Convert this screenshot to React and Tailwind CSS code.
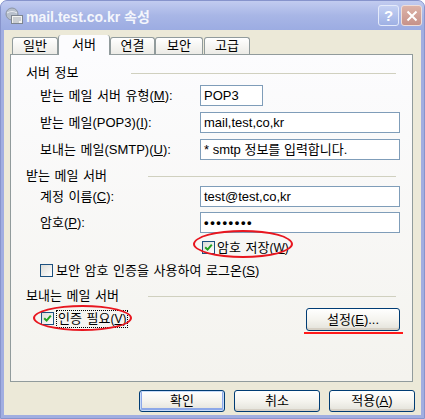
import React from 'react';

const font = "font-['Liberation_Sans','Noto_Sans_CJK_KR',sans-serif]";

const Checkbox = ({ checked }) => (
    <span className="relative w-[13px] h-[13px] shrink-0 border border-[#1C5180] bg-linear-to-br from-[#DCDCD7] to-white flex items-center justify-center">
        {checked && (
            <svg width="9" height="9" viewBox="0 0 9 9">
                <path d="M1.2 4.2 L3.6 6.6 L7.8 1.6" stroke="#21A121" strokeWidth="2" fill="none" />
            </svg>
        )}
    </span>
);

const Tab = ({ label, width, className = '' }) => (
    <div
        className={`h-[17px] border border-b-0 border-[#919B9C] rounded-t-[3px] bg-linear-to-b from-white to-[#ECEBE6] flex items-center justify-center text-[13px] ${className}`}
        style={{ width }}
    >
        {label}
    </div>
);

const GroupHeader = ({ label, textWidth, className = '' }) => (
    <div className={`flex items-center h-[17px] pl-[15px] ${className}`}>
        <span className="shrink-0 text-[13px] [word-spacing:1px]" style={{ width: textWidth }}>{label}</span>
        <div className="flex-1 h-px bg-[#D0D0BF] mr-[16px] mt-px"></div>
    </div>
);

const Field = ({ label, value, width = 200, className = '' }) => (
    <div className={`flex items-center h-[21px] ${className}`}>
        <span className="w-[189px] pl-[29px] text-[13px] [word-spacing:1px]">{label}</span>
        <div
            className="h-[21px] border border-[#7F9DB9] bg-white flex items-center pl-[3px] text-[13px]"
            style={{ width }}
        >
            {value}
        </div>
    </div>
);

const XpButton = ({ children, isDefault, className = '' }) => (
    <div
        className={`h-[22px] rounded-[3px] border border-[#003C74] bg-linear-to-b from-white via-[#F5F4EF] to-[#E3E2DA] flex items-center justify-center text-[13px] ${
            isDefault ? 'shadow-[inset_0_0_0_1px_#C6DAF8,inset_0_-1px_0_2px_#8DA8E8]' : 'shadow-[inset_0_-2px_0_#D6D0C5]'
        } ${className}`}
    >
        {children}
    </div>
);

const MailIcon = () => (
    <svg width="18" height="18" viewBox="0 0 18 18">
        <circle cx="7" cy="7" r="6" fill="#B7BFCB" stroke="#8C95A3" strokeWidth="1" />
        <path d="M2 6 Q7 3 12 6" stroke="#E8EBF0" strokeWidth="1.2" fill="none" />
        <rect x="6.5" y="8.5" width="11" height="8" fill="#F4F4F0" stroke="#7D8590" strokeWidth="1" />
        <path d="M8 11 H16 M8 13 H16 M8 15 H14" stroke="#A0A7B2" strokeWidth="1" />
    </svg>
);

const App = () => {
    return (
        <div className={`w-[425px] h-[419px] ${font} text-black bg-[#A1AEE1] rounded-t-[7px] overflow-hidden flex flex-col border border-[#8794CC]`}>
            {/* Title bar */}
            <div className="h-[29px] shrink-0 flex items-start bg-linear-to-b from-[#C2CCF0] via-[#A8B6E6] to-[#9CACE2]">
                <div className="mt-[6px] ml-[4px]">
                    <MailIcon />
                </div>
                <span className="ml-[3px] mt-[6px] text-[14px] font-bold text-[#F4F6FC]">mail.test.co.kr 속성</span>
                <div className="ml-auto mt-[4px] mr-[2px] flex gap-[2px]">
                    <div className="w-[21px] h-[21px] rounded-[3px] border border-[#E4EAFA] bg-linear-to-b from-[#C5D1F3] to-[#9EB0E4] flex items-center justify-center text-white text-[15px] font-bold leading-none">
                        ?
                    </div>
                    <div className="w-[21px] h-[21px] rounded-[3px] border border-[#EEDDD8] bg-linear-to-b from-[#DDB3A8] to-[#C6928A] flex items-center justify-center">
                        <svg width="12" height="12" viewBox="0 0 12 12">
                            <path d="M1.5 1.5 L10.5 10.5 M10.5 1.5 L1.5 10.5" stroke="white" strokeWidth="2" />
                        </svg>
                    </div>
                </div>
            </div>

            {/* Dialog body */}
            <div className="flex-1 mx-[3px] mb-[3px] bg-[#ECE9D8] flex flex-col">
                {/* Tabs */}
                <div className="flex items-end h-[19px] mt-[5px] pl-[8px] relative z-10">
                    <Tab label="일반" width={46} />
                    <div className="w-[52px] h-[20px] -mb-px bg-[#FCFCFE] border-x border-[#919B9C] rounded-t-[3px] flex flex-col text-[13px]">
                        <div className="h-[3px] rounded-t-[2px] bg-linear-to-b from-[#E68B2C] to-[#FFC73C] -mx-px"></div>
                        <div className="flex-1 flex items-center justify-center pb-[2px]">서버</div>
                    </div>
                    <Tab label="연결" width={45} />
                    <Tab label="보안" width={48} />
                    <Tab label="고급" width={46} className="ml-px" />
                </div>

                {/* Tab panel */}
                <div className="ml-[6px] w-[403px] h-[328px] border border-[#919B9C] bg-linear-to-b from-[#FCFCFE] to-[#F4F3EE] flex flex-col">
                    <GroupHeader label="서버 정보" textWidth={105} className="mt-[9px]" />
                    <Field className="mt-[4px]" label={<>받는 메일 서버 유형(<u>M</u>):</>} value="POP3" width={63} />
                    <Field className="mt-[6px]" label={<>받는 메일(POP3)(<u>I</u>):</>} value="mail,test,co,kr" />
                    <Field className="mt-[6px]" label={<>보내는 메일(SMTP)(<u>U</u>):</>} value="* smtp 정보를 입력합니다." />

                    <GroupHeader label="받는 메일 서버" textWidth={122} className="mt-[7px]" />
                    <Field className="mt-[2px]" label={<>계정 이름(<u>C</u>):</>} value="test@test,co,kr" />
                    <Field
                        className="mt-[5px]"
                        label={<>암호(<u>P</u>):</>}
                        value={<span className="text-[13px] font-bold tracking-[1.6px]">••••••••</span>}
                    />

                    <div className="flex items-center h-[17px] mt-[6px] pl-[191px]">
                        <div className="relative flex items-center">
                            <Checkbox checked />
                            <span className="absolute -left-[9px] -top-[11px] w-[100px] h-[28px] rounded-[50%] border-2 border-[#E8161F]"></span>
                        </div>
                        <span className="ml-[2px] text-[13px] [word-spacing:1px]">
                            암호 저장<span className="text-[12px]">(<u>W</u>)</span>
                        </span>
                    </div>

                    <div className="flex items-center h-[17px] mt-[6px] pl-[29px]">
                        <Checkbox />
                        <span className="ml-[3px] text-[13px] [word-spacing:1px]">보안 암호 인증을 사용하여 로그온(<u>S</u>)</span>
                    </div>

                    <GroupHeader label="보내는 메일 서버" textWidth={122} className="mt-[8px]" />

                    <div className="flex items-start h-[23px] mt-[4px] pl-[30px]">
                        <div className="flex items-center h-[17px] mt-[2px]">
                            <div className="relative flex items-center">
                                <Checkbox checked />
                                <span className="absolute -left-[8px] -top-[7px] w-[99px] h-[26px] rounded-[50%] border-2 border-[#E8161F]"></span>
                            </div>
                            <span className="ml-[2px] px-px text-[13px] border border-dotted border-black leading-[15px] [word-spacing:1px]">
                                인증 필요<span className="text-[12px]">(<u>V</u>)</span>
                            </span>
                        </div>
                        <div className="ml-auto mr-[12px] relative">
                            <XpButton className="w-[94px] h-[23px]">설정(<u>E</u>)...</XpButton>
                            <div className="absolute -left-[2px] -right-[3px] -bottom-[3px] h-[2px] bg-[#FF1A1A]"></div>
                        </div>
                    </div>
                </div>

                {/* Bottom buttons */}
                <div className="flex justify-end gap-[9px] mt-[8px] pr-[6px]">
                    <XpButton isDefault className="w-[86px]">확인</XpButton>
                    <XpButton className="w-[86px]">취소</XpButton>
                    <XpButton className="w-[86px]">적용(<u>A</u>)</XpButton>
                </div>
            </div>
        </div>
    );
};

export default App;
